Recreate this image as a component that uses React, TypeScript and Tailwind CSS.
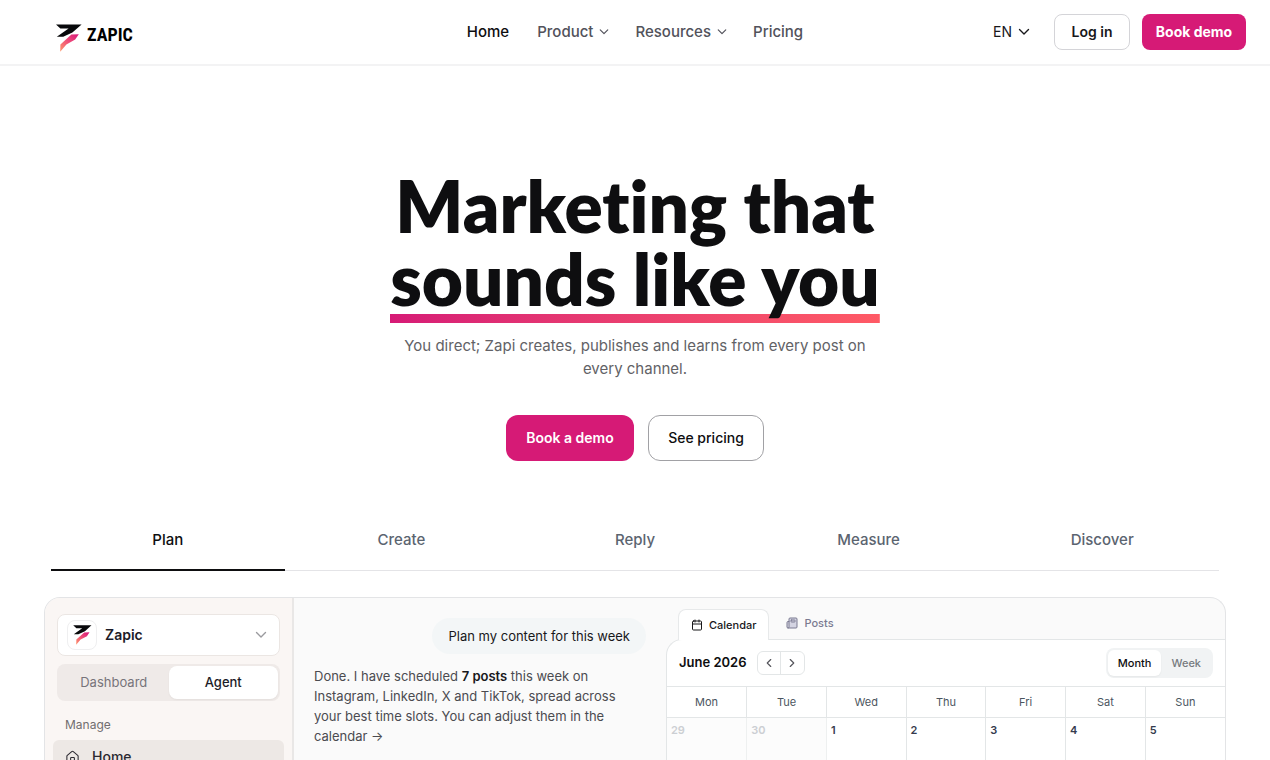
import { Calendar, ChevronLeft, ChevronRight, House, Newspaper } from "lucide-react";

const days = ["Mon", "Tue", "Wed", "Thu", "Fri", "Sat", "Sun"];
const dates = [29, 30, 1, 2, 3, 4, 5];
const features = ["Plan", "Create", "Reply", "Measure", "Discover"];

function Mark({ className, id }: { className: string; id: string }) {
  return (
    <svg viewBox="0 0 26 28" className={className} aria-hidden="true">
      <defs>
        <linearGradient id={id} x1="22" y1="10" x2="4" y2="28" gradientUnits="userSpaceOnUse">
          <stop offset="0" stopColor="#d6187a" />
          <stop offset="0.45" stopColor="#ee4a78" />
          <stop offset="1" stopColor="#ff9a6b" />
        </linearGradient>
      </defs>
      <path d="M0 .4H25.6L16.4 8.6L7.2 12.8H.8L12.6 4.6H4.4Z" fill="#08090b" />
      <path d="M22.8 10.2L19.2 15.6L10.4 20.4L4.2 27.8L4.4 20.4L15.4 10.6Z" fill={`url(#${id})`} />
    </svg>
  );
}

function Chevron({ className }: { className: string }) {
  return (
    <svg viewBox="0 0 12 12" className={className} fill="none" stroke="currentColor" strokeWidth="1.4" strokeLinecap="round" strokeLinejoin="round" aria-hidden="true">
      <path d="M1.5 3.5L6 8L10.5 3.5" />
    </svg>
  );
}

function Header() {
  return (
    <header className="grid shrink-0 grid-cols-[1fr_auto_1fr] items-center border-b-2 border-[#f3f3f4] px-6 h-[66px]">
      <a href="#home" className="ml-8 flex items-start gap-[5px] justify-self-start pt-3">
        <Mark id="brand" className="h-7 w-[26px]" />
        <span className="font-['Liberation_Sans_Narrow','Roboto_Condensed',Roboto,sans-serif] text-[18px] leading-[22px] font-bold text-black">ZAPIC</span>
      </a>
      <nav className="flex items-center gap-[26px] text-[15px] leading-6 font-medium text-[#52525b]">
        <a href="#home" className="mr-0.5 text-[#0e0e10]">Home</a>
        <button className="flex items-center gap-1.5">Product <Chevron className="size-2.5" /></button>
        <button className="flex items-center gap-1.5">Resources <Chevron className="size-2.5" /></button>
        <a href="#pricing">Pricing</a>
      </nav>
      <div className="flex items-center justify-end gap-3 text-sm">
        <button className="mr-3 flex items-center gap-1.5 text-[#18181b]">EN <Chevron className="size-3" /></button>
        <button className="h-9 w-19 rounded-lg border border-[#d4d4d8] font-semibold text-[#18181b]">Log in</button>
        <button className="h-9 w-26 rounded-lg bg-[#d61a76] font-bold text-white">Book demo</button>
      </div>
    </header>
  );
}

function Hero() {
  return (
    <section className="flex shrink-0 flex-col items-center px-6 pt-[103px] text-center">
      <h1 className="font-[Lato,sans-serif] text-[71px] leading-[73px] font-extrabold text-[#0e0e10] [font-variant-ligatures:none]">
        Marketing that
        <br />
        <span className="inline-block bg-linear-to-r from-[#d61a76] to-[#ff5a65] bg-[length:100%_9px] bg-bottom bg-no-repeat pb-2">sounds like you</span>
      </h1>
      <p className="mt-[11px] max-w-[480px] text-[15px] leading-[23px] text-[#626266]">
        You direct; Zapi creates, publishes and learns from every post on every channel.
      </p>
      <div className="mt-[35px] flex gap-3.5 text-sm">
        <button className="h-[46px] w-32 rounded-xl bg-[#d61a76] font-semibold text-white">Book a demo</button>
        <button className="h-[46px] w-29 rounded-xl border border-[#a1a1a5] font-medium text-[#0e0e10]">See pricing</button>
      </div>
    </section>
  );
}

function Sidebar() {
  return (
    <aside className="w-[249px] shrink-0 border-r-2 border-[#e9e7e6] bg-[#faf6f4] px-2 pt-4">
      <button className="mx-1 flex h-[42px] w-[223px] items-center rounded-lg border border-[#ebe6e3] bg-white pr-3 pl-[9px] text-sm font-semibold text-[#1c1c28]">
        <span className="mr-2 flex size-[30px] items-center justify-center rounded-lg border border-[#efeff0]">
          <Mark id="workspace" className="h-5 w-[19px]" />
        </span>
        Zapic
        <Chevron className="ml-auto size-3 text-[#9a9a9e]" />
      </button>
      <div className="mx-1 mt-2 flex h-[37px] w-[223px] rounded-lg bg-[#efeae8] p-0.5 text-[13px]">
        <button className="flex-1 text-[#77747a]">Dashboard</button>
        <button className="flex-1 rounded-lg bg-white font-medium text-[#1c1c28] shadow-xs">Agent</button>
      </div>
      <div className="mt-3.5 pl-3 text-xs leading-5 text-[#716e70]">Manage</div>
      <a href="#dashboard" className="mt-[5px] flex h-[34px] items-center gap-3 rounded-md bg-[#ede8e5] pl-3 text-sm font-medium text-[#2b2930]">
        <House className="size-[15px]" strokeWidth={1.7} />
        Home
      </a>
    </aside>
  );
}

function Chat() {
  return (
    <div className="flex w-[372px] shrink-0 flex-col px-5 pt-5 text-[13px] leading-5">
      <p className="self-end rounded-full bg-[#f3f6f7] px-4 py-2 text-[#18181b]">Plan my content for this week</p>
      <p className="mt-3 max-w-[312px] text-[#4b4b50]">
        Done. I have scheduled <strong className="font-semibold text-[#18181b]">7 posts</strong> this week on Instagram, LinkedIn, X and TikTok, spread across your best time slots. You can adjust them in the calendar →
      </p>
    </div>
  );
}

function Planner() {
  return (
    <div className="flex min-w-0 flex-1 flex-col pt-[11px]">
      <div className="flex h-[30px] items-start gap-[17px] pl-3 text-[11px]">
        <button className="z-10 flex h-[31px] items-center gap-1.5 rounded-t-lg border border-b-0 border-[#e7e9ea] bg-white px-3 font-medium text-[#18181b]">
          <Calendar className="size-3" /> Calendar
        </button>
        <button className="flex h-7 items-center gap-1.5 font-medium text-[#7b7a91]">
          <Newspaper className="size-3 fill-[#d4d4e2]" /> Posts
        </button>
      </div>
      <div className="min-h-0 flex-1 rounded-tl-2xl border-t border-l border-[#e3e6e7] bg-white">
        <div className="flex h-[46px] items-center px-3">
          <h2 className="text-[13px] font-semibold text-[#0e0e10]">June 2026</h2>
          <div className="ml-2.5 flex h-6 divide-x divide-[#e3e6e7] rounded-md border border-[#e3e6e7] text-[#55555c]">
            <button aria-label="Previous month" className="flex w-[23px] items-center justify-center"><ChevronLeft className="size-3.5" /></button>
            <button aria-label="Next month" className="flex w-[23px] items-center justify-center"><ChevronRight className="size-3.5" /></button>
          </div>
          <div className="ml-auto flex h-[30px] rounded-lg bg-[#f1f3f4] p-0.5 text-[11px] font-medium">
            <button className="rounded-md bg-white px-2.5 text-[#0e0e10] shadow-xs">Month</button>
            <button className="px-2.5 text-[#777b80]">Week</button>
          </div>
        </div>
        <table className="w-full table-fixed border-collapse text-[11px]">
          <thead>
            <tr className="h-[31px] border-y border-[#e3e6e7] text-[#4b5560]">
              {days.map((day) => <th key={day} className="border-r border-[#e3e6e7] font-normal last:border-r-0">{day}</th>)}
            </tr>
          </thead>
          <tbody>
            <tr className="h-24">
              {dates.map((date) => (
                <td key={date} className={date > 20 ? "border-r border-[#eef0f0] bg-[#fcfcfc] px-1 py-1 align-top font-semibold text-[#cccfd3]" : "border-r border-[#e3e6e7] px-1 py-1 align-top font-semibold text-[#363b4d] last:border-r-0"}>{date}</td>
              ))}
            </tr>
          </tbody>
        </table>
      </div>
    </div>
  );
}

export default function App() {
  return (
    <div className="flex h-screen flex-col overflow-hidden bg-white font-[Inter,sans-serif] text-[#0e0e10]">
      <Header />
      <Hero />
      <div role="tablist" className="mx-[51px] mt-12 grid shrink-0 grid-cols-5 border-b border-[#e4e4e7]">
        {features.map((name, index) => (
          <button key={name} role="tab" aria-selected={index === 0} className={index === 0 ? "-mb-px h-[62px] border-b-2 border-[#0e0e10] pt-0.5 text-[15px] font-medium text-[#0e0e10]" : "-mb-px h-[62px] border-b-2 border-transparent pt-0.5 text-[15px] font-medium text-[#5b6470]"}>
            {name}
          </button>
        ))}
      </div>
      <section className="mx-11 mt-[26px] flex min-h-0 flex-1 overflow-hidden rounded-t-2xl border border-b-0 border-[#e3e4e6] bg-[#fafafa]">
        <Sidebar />
        <Chat />
        <Planner />
      </section>
    </div>
  );
}
